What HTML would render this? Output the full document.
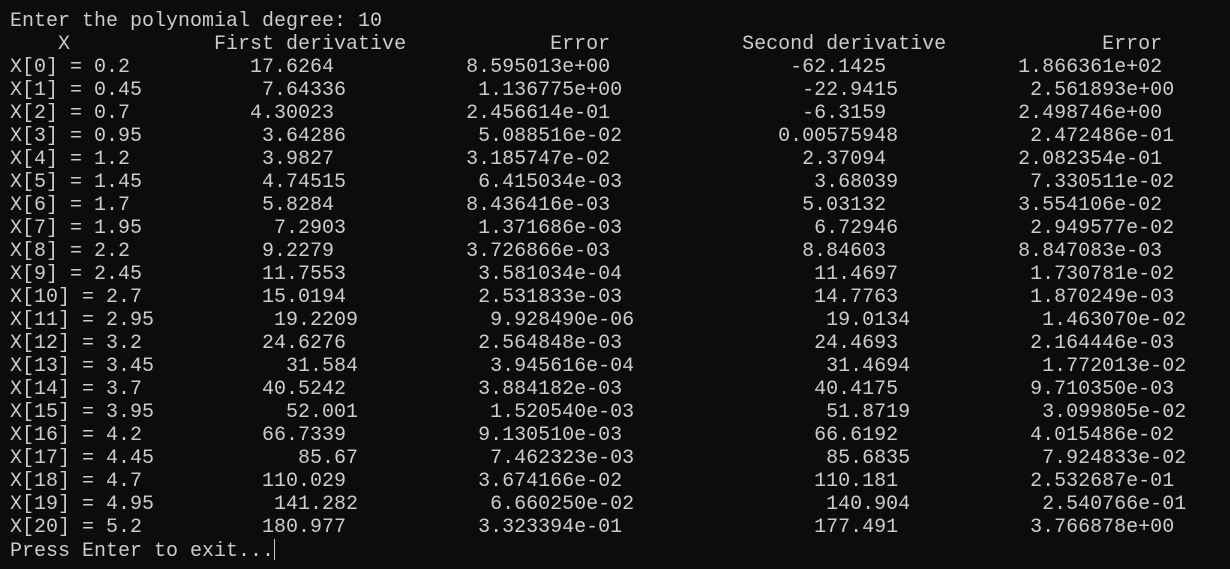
<!DOCTYPE html>
<html><head><meta charset="utf-8"><style>
html,body{margin:0;padding:0;background:#0c0c0c;width:1230px;height:569px;overflow:hidden}
pre{margin:0;position:absolute;left:10px;top:10px;font-family:"Liberation Mono","DejaVu Sans Mono",monospace;font-size:20px;line-height:23px;color:#cccccc;white-space:pre}
.cur{display:inline-block;width:1px;height:21px;background:#cccccc;vertical-align:-4px}
</style></head><body><pre>Enter the polynomial degree: 10
    X            First derivative            Error           Second derivative             Error
X[0] = 0.2          17.6264           8.595013e+00               -62.1425           1.866361e+02
X[1] = 0.45          7.64336           1.136775e+00               -22.9415           2.561893e+00
X[2] = 0.7          4.30023           2.456614e-01                -6.3159           2.498746e+00
X[3] = 0.95          3.64286           5.088516e-02             0.00575948           2.472486e-01
X[4] = 1.2           3.9827           3.185747e-02                2.37094           2.082354e-01
X[5] = 1.45          4.74515           6.415034e-03                3.68039           7.330511e-02
X[6] = 1.7           5.8284           8.436416e-03                5.03132           3.554106e-02
X[7] = 1.95           7.2903           1.371686e-03                6.72946           2.949577e-02
X[8] = 2.2           9.2279           3.726866e-03                8.84603           8.847083e-03
X[9] = 2.45          11.7553           3.581034e-04                11.4697           1.730781e-02
X[10] = 2.7          15.0194           2.531833e-03                14.7763           1.870249e-03
X[11] = 2.95          19.2209           9.928490e-06                19.0134           1.463070e-02
X[12] = 3.2          24.6276           2.564848e-03                24.4693           2.164446e-03
X[13] = 3.45           31.584           3.945616e-04                31.4694           1.772013e-02
X[14] = 3.7          40.5242           3.884182e-03                40.4175           9.710350e-03
X[15] = 3.95           52.001           1.520540e-03                51.8719           3.099805e-02
X[16] = 4.2          66.7339           9.130510e-03                66.6192           4.015486e-02
X[17] = 4.45            85.67           7.462323e-03                85.6835           7.924833e-02
X[18] = 4.7          110.029           3.674166e-02                110.181           2.532687e-01
X[19] = 4.95          141.282           6.660250e-02                140.904           2.540766e-01
X[20] = 5.2          180.977           3.323394e-01                177.491           3.766878e+00
Press Enter to exit...<span class="cur"></span></pre></body></html>
